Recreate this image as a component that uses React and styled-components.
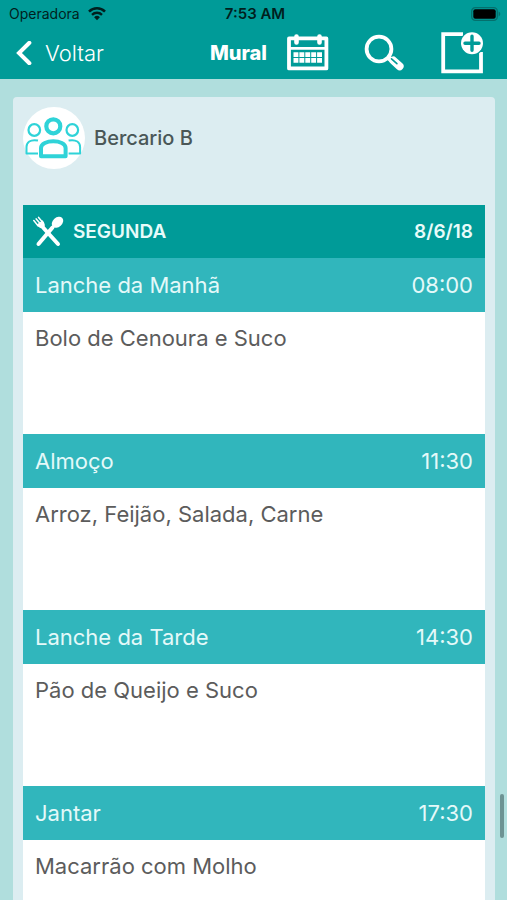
import React from "react";
import styled, { createGlobalStyle } from "styled-components";

const meals = [
  { name: "Lanche da Manhã", time: "08:00", food: "Bolo de Cenoura e Suco" },
  { name: "Almoço", time: "11:30", food: "Arroz, Feijão, Salada, Carne" },
  { name: "Lanche da Tarde", time: "14:30", food: "Pão de Queijo e Suco" },
  { name: "Jantar", time: "17:30", food: "Macarrão com Molho" },
];

export default function App() {
  return (
    <Screen>
      <GlobalStyle />
      <Header>
        <StatusBar>
          <Carrier>
            Operadora
            <WifiIcon />
          </Carrier>
          <Clock>7:53 AM</Clock>
          <BatteryIcon />
        </StatusBar>
        <NavBar>
          <BackButton type="button">
            <BackIcon />
            Voltar
          </BackButton>
          <Title>Mural</Title>
          <Actions>
            <IconButton type="button" aria-label="Calendário">
              <CalendarIcon />
            </IconButton>
            <IconButton type="button" aria-label="Buscar">
              <SearchIcon />
            </IconButton>
            <IconButton type="button" aria-label="Novo">
              <NewIcon />
            </IconButton>
          </Actions>
        </NavBar>
      </Header>

      <Content>
        <Card>
          <Group>
            <Avatar>
              <PeopleIcon />
            </Avatar>
            <GroupName>Bercario B</GroupName>
          </Group>

          <Menu>
            <Day>
              <CutleryIcon />
              <DayName>SEGUNDA</DayName>
              <DayDate>8/6/18</DayDate>
            </Day>
            {meals.map((meal) => (
              <Meal key={meal.name}>
                <MealHeader>
                  <MealName>{meal.name}</MealName>
                  <MealTime>{meal.time}</MealTime>
                </MealHeader>
                <MealFood>{meal.food}</MealFood>
              </Meal>
            ))}
          </Menu>
        </Card>
      </Content>
      <ScrollIndicator />
    </Screen>
  );
}

function WifiIcon() {
  return (
    <svg width="18" height="14" viewBox="0 0 18 14" fill="none" stroke="#001f1e">
      <path d="M1 4.6a11.4 11.4 0 0 1 16 0" strokeWidth="2.6" />
      <path d="M4 7.8a7.2 7.2 0 0 1 10 0" strokeWidth="2.4" />
      <path d="M9 13.2 6.1 10.2a4.2 4.2 0 0 1 5.8 0Z" fill="#001f1e" stroke="none" />
    </svg>
  );
}

function BatteryIcon() {
  return (
    <svg width="30" height="14" viewBox="0 0 30 14">
      <rect x="0.7" y="0.7" width="25.6" height="12.6" rx="3.6" fill="none" stroke="#04706d" strokeWidth="1.3" />
      <rect x="2.3" y="2.3" width="22.4" height="9.4" rx="2" fill="#000" />
      <path d="M27.6 4.6c2.2.7 2.2 4.1 0 4.8Z" fill="#04706d" />
    </svg>
  );
}

function BackIcon() {
  return (
    <svg width="16" height="24" viewBox="0 0 16 24" fill="none" stroke="#fff" strokeWidth="4">
      <path d="M13.4 1.8 3 12l10.4 10.2" strokeLinecap="round" strokeLinejoin="miter" />
    </svg>
  );
}

function CalendarIcon() {
  const columns = [6.5, 12.4, 18.3, 24.2, 30.1];
  return (
    <svg width="42" height="38" viewBox="0 1 42 38" fill="none" stroke="#fff">
      <path d="M2 5.4h37.4v30H2Z" strokeWidth="3.8" strokeLinejoin="round" />
      <path d="M2 15.4h37.5" strokeWidth="2.6" />
      <path d="M9.5 3.6v5.8M32.5 3.6v5.8" strokeWidth="4.6" strokeLinecap="round" />
      {columns.map((x) => (
        <path
          key={x}
          d={`M${x} 19.2h4.9v4.7h-4.9ZM${x} 25h4.9v4.7h-4.9Z`}
          fill="#fff"
          stroke="none"
        />
      ))}
    </svg>
  );
}

function SearchIcon() {
  return (
    <svg width="42" height="38" viewBox="1 2 42 38" fill="none" stroke="#fff">
      <circle cx="16" cy="17" r="12.4" strokeWidth="3.8" />
      <path d="m25.500 25.800 4 3.200" strokeWidth="5" />
      <path d="m30.400 28.600 6.200 5.600" strokeWidth="8" strokeLinecap="round" />
      <path d="m28.500 26.800 5.400 4.800" stroke="#009b98" strokeWidth="1.600" strokeLinecap="round" />
    </svg>
  );
}

function NewIcon() {
  return (
    <svg width="42" height="42" viewBox="0 0 42 42" fill="none">
      <path d="M22 2.2H2.2v37.2h37.800V20" stroke="#fff" strokeWidth="3.8" />
      <circle cx="31" cy="11.3" r="12.2" fill="#009b98" />
      <circle cx="31" cy="11.3" r="11" fill="#fff" />
      <path d="M24 11.3h14M31 4.3v14" stroke="#009b98" strokeWidth="3.4" strokeLinecap="round" />
    </svg>
  );
}

function PeopleIcon() {
  return (
    <svg width="60" height="60" viewBox="1 1 60 60" fill="none" stroke="#2fd3d8" strokeLinejoin="round">
      <circle cx="11.3" cy="23" r="5.8" strokeWidth="2.2" />
      <circle cx="49.3" cy="23" r="5.8" strokeWidth="2.2" />
      <path d="M15 33.5c-8-1.5-11.5 2-11.5 6.5v6.500H15" strokeWidth="2" />
      <path d="M45.600 33.5c8-1.5 11.500 2 11.500 6.500v6.500H45.600" strokeWidth="2" />
      <circle cx="30.300" cy="19.300" r="7" strokeWidth="4.200" />
      <path d="M18 49.300V41c0-9 24.600-9 24.600 0v8.300Z" strokeWidth="4" />
    </svg>
  );
}

function CutleryIcon() {
  return (
    <svg width="32" height="32" viewBox="1 1 32 32" fill="none" stroke="#fff" strokeLinecap="round">
      <path d="m11.500 13 14.500 16" strokeWidth="4" />
      <path d="M20.500 12.500 6.500 29" strokeWidth="4" />
      <path d="m1.800 5.600 4.400 5.300M4.200 3.900l4.400 5M6.600 2.400l4.200 5" strokeWidth="1.500" />
      <path d="M4.600 9.800 10.600 5.200c2.400 3.200 2.800 5.800 1.600 7.600-1.800 1.400-5 .4-7.600-3Z" fill="#fff" stroke="none" />
      <ellipse cx="25.500" cy="7.200" rx="6.400" ry="4.700" transform="rotate(-42 25.500 7.200)" fill="#fff" stroke="none" />
    </svg>
  );
}

const GlobalStyle = createGlobalStyle`
  * {
    box-sizing: border-box;
  }

  body {
    margin: 0;
    font-family: Inter, "Liberation Sans", sans-serif;
    background: #b0dedd;
  }
`;

const Screen = styled.div`
  position: relative;
  display: flex;
  flex-direction: column;
  height: 100vh;
  overflow: hidden;
`;

const Header = styled.header`
  flex-shrink: 0;
  background: #009b98;
  color: #fff;
`;

const StatusBar = styled.div`
  display: grid;
  grid-template-columns: 1fr auto 1fr;
  align-items: center;
  height: 27px;
  padding: 0 6px 0 9px;
  color: #001f1e;
  font-size: 14px;

  > svg {
    justify-self: end;
  }
`;

const Carrier = styled.div`
  display: flex;
  align-items: center;
  gap: 8px;
`;

const Clock = styled.div`
  font-size: 15px;
  font-weight: 600;
`;

const NavBar = styled.nav`
  display: grid;
  grid-template-columns: 1fr auto 1fr;
  align-items: center;
  height: 52px;
  padding: 0 24px 0 16px;
`;

const BackButton = styled.button`
  display: flex;
  align-items: center;
  justify-self: start;
  gap: 13px;
  padding: 0;
  border: 0;
  background: none;
  color: #fff;
  font: 300 22px Inter, sans-serif;
`;

const Title = styled.h1`
  margin: 0;
  font-size: 20px;
  font-weight: 800;
`;

const Actions = styled.div`
  display: flex;
  align-items: center;
  justify-self: end;
  gap: 35px;
  padding-left: 20px;
`;

const IconButton = styled.button`
  display: flex;
  padding: 0;
  border: 0;
  background: none;
`;

const Content = styled.main`
  flex: 1;
  min-height: 0;
  padding: 18px 12px 0 13px;
`;

const Card = styled.section`
  padding: 10px 10px 0;
  border-radius: 4px 4px 0 0;
  background: #dcedf1;
`;

const Group = styled.div`
  display: flex;
  align-items: center;
  gap: 9px;
  margin-bottom: 36px;
`;

const Avatar = styled.div`
  display: flex;
  align-items: center;
  justify-content: center;
  width: 62px;
  height: 62px;
  border-radius: 50%;
  background: #fff;
`;

const GroupName = styled.h2`
  margin: 0;
  color: #4a5757;
  font-size: 20px;
  font-weight: 500;
`;

const Menu = styled.div`
  background: #fff;
`;

const Day = styled.div`
  display: flex;
  align-items: center;
  gap: 8px;
  height: 53px;
  padding: 0 12px 0 10px;
  background: #009b98;
  color: #e8fbfa;
  font-size: 19px;
  font-weight: 600;
`;

const DayName = styled.span`
  flex: 1;
`;

const DayDate = styled.span``;

const Meal = styled.article`
  height: 176px;
`;

const MealHeader = styled.div`
  display: flex;
  align-items: center;
  justify-content: space-between;
  height: 54px;
  padding: 0 12px;
  background: #31b6bc;
  color: #e4f9f9;
  font-size: 22px;
`;

const MealName = styled.span``;

const MealTime = styled.span``;

const MealFood = styled.p`
  margin: 0;
  padding: 12px;
  color: #5c5c5c;
  font-size: 22px;
  line-height: 28px;
`;

const ScrollIndicator = styled.div`
  position: absolute;
  top: 794px;
  right: 3px;
  width: 4px;
  height: 44px;
  border-radius: 2px;
  background: #6d9393;
`;
